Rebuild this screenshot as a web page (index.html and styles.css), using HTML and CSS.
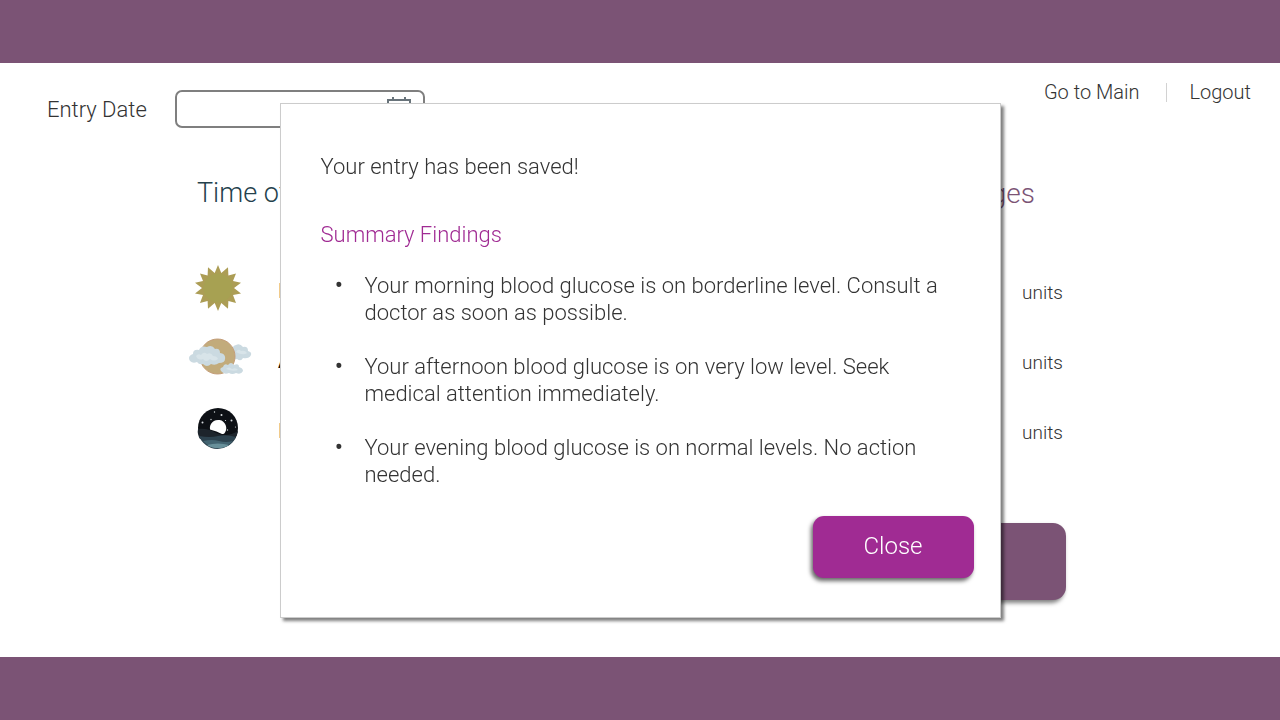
FILE: index.html
```html
<!DOCTYPE html>
<html lang="en">
<head>
<meta charset="utf-8">
<title>Blood glucose entry</title>
<link rel="stylesheet" href="styles.css">
</head>
<body>
<div class="bar"></div>
<main class="page">
  <header class="top">
    <label class="date-label" for="entry-date">Entry Date</label>
    <div class="date-field">
      <input class="date-input" id="entry-date" type="text">
      <svg class="calendar" viewBox="0 0 24 24" aria-hidden="true"><path d="M1 3h22v20H1zM6 0v3M18 0v3M1 9h22"/></svg>
    </div>
    <nav class="nav">
      <a href="#">Go to Main</a>
      <span class="divider"></span>
      <a href="#">Logout</a>
    </nav>
  </header>
  <section class="entries">
    <table class="readings">
      <thead>
        <tr><th class="time-head" colspan="2">Time of Day</th><th class="dose-head">Dosages</th></tr>
      </thead>
      <tbody>
        <tr>
          <td class="icon-cell"><svg class="icon" viewBox="0 0 64 48" aria-hidden="true">
            <path fill="#ac9d55" d="M29 1L32.300 9L39 3.300L39.400 11.500L47 9.500L44 17L52 18.800L45 24L52 29.500L44 31L47 39L39.400 37L39 44.700L32.300 39L29 47L25.700 39L19 44.700L18.600 37L11 39L14 31L6 29.500L13 24L6 18.800L14 17L11 9.500L18.600 11.500L19 3.300L25.700 9Z"/>
            <circle cx="29" cy="24" r="14.500" fill="#a7a152"/></svg></td>
          <td class="time">Morning</td><td class="unit">units</td>
        </tr>
        <tr>
          <td class="icon-cell"><svg class="icon" viewBox="0 0 64 48" aria-hidden="true">
            <path fill="#cbdae1" d="M42 22q-1-4 3-5q-3-5 2-6q4-2 7 2q5-1 5 4q4 1 3 4q-2 4-8 3q-2 4-6 1q-4 1-6-3z"/>
            <circle cx="28.500" cy="22.500" r="17.500" fill="#c2ab7b" stroke="#c49d78"/>
            <path fill="#cbdae1" d="M1 27q-3-5 3-7q0-5 6-4q2-5 8-3q5-3 8 2q5-1 5 4q6 1 5 6q0 4-6 4q-4 3-8 1q-4 4-8 0q-4 1-6-2q-4 2-7-1z"/>
            <path fill="#d8e4e9" d="M7 22q2-3 5-1q3-4 6-1q4-2 6 2q4 0 5 3q-4 3-8 0q-4 4-7 0q-5 2-7-3z"/>
            <path fill="#cbdae1" d="M32 37q-2-3 2-4q1-4 5-2q3-4 6 0q5-2 5 2q4 1 4 4q-2 4-7 2q-4 2-7 0q-5 2-8-2z"/>
            <path fill="#d8e4e9" d="M37 35q3-3 6 0q4-2 6 1q-5 2-12-1zM47 18q2-4 5-1q4-1 6 2q-4 3-11-1z"/></svg></td>
          <td class="time strong">Afternoon</td><td class="unit">units</td>
        </tr>
        <tr>
          <td class="icon-cell"><svg class="icon" viewBox="0 0 64 48" aria-hidden="true">
            <circle cx="29" cy="24" r="20" fill="#0d1015"/>
            <path fill="#1d242b" d="M9 25q10-1 18 4q11 5 22-2a20 20 0 0 1-3 8H11q-3-5-2-10z"/>
            <path fill="#2d424e" d="M10 32q11 2 19 0t18 1a20 20 0 0 1-37-1z"/>
            <path fill="#426370" d="M14 37q9-2 16 0t14 0a20 20 0 0 1-30 0z"/>
            <path fill="#68909a" d="M18 41q11-3 22 0a20 20 0 0 1-22 0z"/>
            <path fill="#fff" d="M21 25.500a8.200 8.200 0 1 1 15 3q-1 2-3 1.500q-5-3-12-4.500z"/>
            <g fill="#d6dadd"><circle cx="13.500" cy="18.500" r="1"/><circle cx="32.500" cy="11" r="1"/><circle cx="42.500" cy="16.500" r="1"/><circle cx="25.500" cy="8" r=".7"/><circle cx="22" cy="15.500" r=".7"/><circle cx="36.500" cy="16.500" r=".6"/><circle cx="46.500" cy="23" r=".6"/><circle cx="38.500" cy="26" r=".7"/></g></svg></td>
          <td class="time">Evening</td><td class="unit">units</td>
        </tr>
      </tbody>
    </table>
    <button class="save" type="button" aria-label="Save entry"></button>
  </section>
</main>
<div class="bar"></div>

<div class="overlay">
  <div class="dialog" role="dialog" aria-labelledby="saved">
    <p class="message" id="saved">Your entry has been saved!</p>
    <h2 class="summary">Summary Findings</h2>
    <ul class="findings">
      <li>Your morning blood glucose is on borderline level. Consult a doctor as soon as possible.</li>
      <li>Your afternoon blood glucose is on very low level. Seek medical attention immediately.</li>
      <li>Your evening blood glucose is on normal levels. No action needed.</li>
    </ul>
    <button class="close" type="button">Close</button>
  </div>
</div>
</body>
</html>
```

FILE: styles.css
```css
* { box-sizing: border-box; }
body {
  margin: 0;
  min-height: 100vh;
  display: grid;
  grid-template-rows: 63px 1fr 63px;
  background: #fff;
  color: #333;
  font: 300 22px/27px Roboto, "Liberation Sans", sans-serif;
}
.bar { background: #7b5375; }
.top {
  display: flex;
  align-items: flex-start;
  padding: 27px 29px 0 47px;
}
.date-label { width: 128px; line-height: 40px; }
.date-field { position: relative; width: 250px; height: 38px; }
.date-input {
  width: 100%;
  height: 100%;
  border: 2px solid #7f7f7f;
  border-radius: 7px;
  padding: 0 48px 0 12px;
  font: inherit;
}
.calendar {
  position: absolute;
  right: 14px;
  top: 7px;
  width: 24px;
  height: 24px;
  fill: none;
  stroke: #68737a;
  stroke-width: 2;
}
.nav {
  margin-left: auto;
  margin-top: -11px;
  display: flex;
  align-items: center;
  font-size: 20px;
}
.nav a { color: inherit; text-decoration: none; }
.divider { width: 1px; height: 19px; margin: 0 23px 0 26px; background: #d2d2d2; }
.entries {
  padding: 38px 214px 56px 189px;
  display: flex;
  flex-direction: column;
}
.readings { width: 100%; border-collapse: collapse; }
.readings th, .readings td { padding: 0; text-align: left; }
.readings th { height: 50px; font-size: 28px; font-weight: 300; }
.readings .time-head { padding-left: 8px; color: #24414c; font-size: 27px; }
.readings .dose-head { padding-right: 31px; text-align: right; color: #7b5375; }
.readings thead::after { content: ""; display: block; height: 35px; }
.readings tbody tr { height: 70px; }
.icon-cell { width: 89px; }
.icon { display: block; width: 64px; height: 48px; }
.readings .time { padding-top: 6px; font-size: 20px; }
.readings .strong { color: #111; font-weight: 500; }
.readings .unit { padding: 9px 3px 0 0; text-align: right; font-size: 19px; }
.save {
  align-self: flex-end;
  width: 264px;
  height: 77px;
  margin-top: 60px;
  border: 0;
  border-radius: 13px;
  background: #7b5375;
  box-shadow: -2px 3px 4px rgba(0, 0, 0, .5);
}
.overlay {
  position: fixed;
  inset: 0;
  display: flex;
  align-items: center;
  justify-content: center;
}
.dialog {
  width: 721px;
  padding: 49px 26px 39px 40px;
  display: flex;
  flex-direction: column;
  background: #fff;
  border: 1px solid #ccc;
  box-shadow: 3px 3px 3px rgba(0, 0, 0, .5);
}
.message, .summary { margin: 0; font-size: 22px; font-weight: 300; }
.summary { margin-top: 41px; color: #a02b93; }
.findings {
  margin: 24px 0 0;
  padding: 0 14px 0 44px;
  list-style: none;
  display: flex;
  flex-direction: column;
  gap: 27px;
}
.findings li { position: relative; }
.findings li::before { content: "•"; position: absolute; left: -30px; font-size: 27px; }
.close {
  align-self: flex-end;
  width: 161px;
  height: 62px;
  margin-top: 28px;
  border: 0;
  border-radius: 11px;
  background: #a02b93;
  color: #fff;
  font: inherit;
  font-size: 24px;
  box-shadow: -2px 3px 4px rgba(0, 0, 0, .6);
}
```
